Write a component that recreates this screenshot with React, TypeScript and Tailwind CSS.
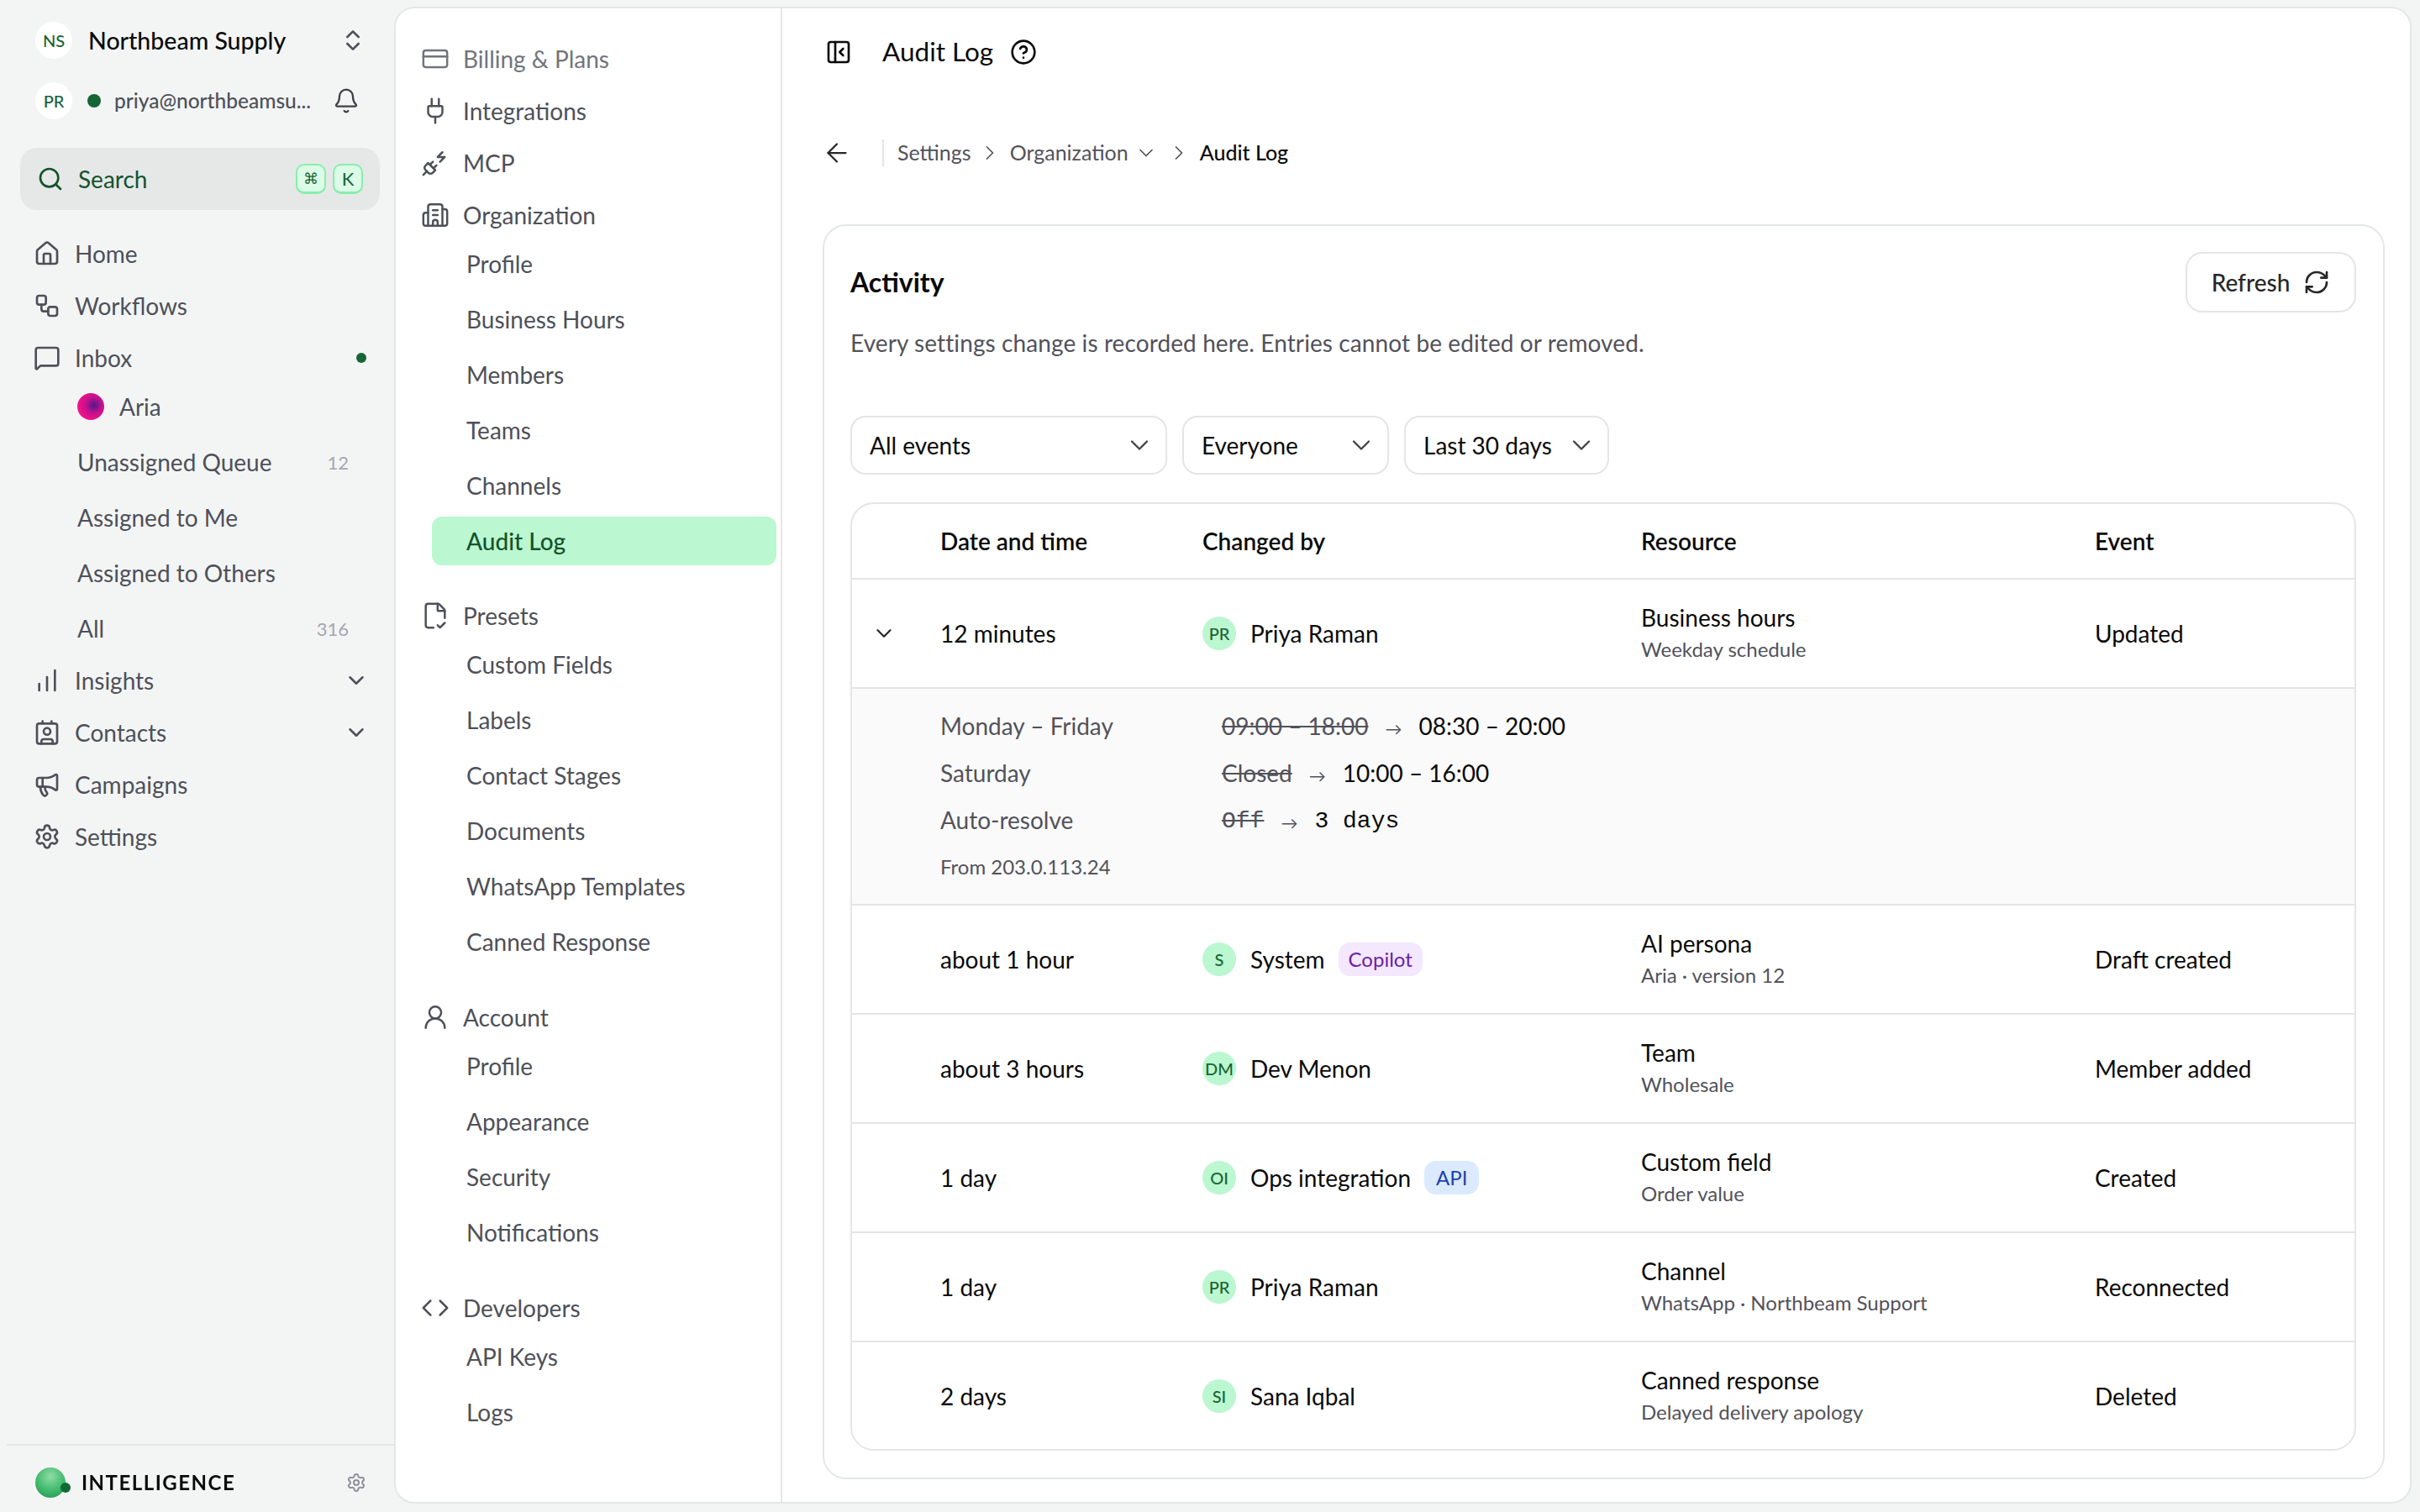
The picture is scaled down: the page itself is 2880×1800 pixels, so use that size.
import React from 'react';
import {
  ArrowLeft, Bell, Building2, ChartNoAxesColumnIncreasing, ChevronDown, ChevronRight, ChevronsUpDown, CircleHelp, Code,
  Contact, CreditCard, FileCheckCorner, House, Megaphone, MessageSquare, PanelLeftClose, Plug, PlugZap,
  RefreshCw, Search, Settings, UserRound, Workflow,
} from 'lucide-react';

type RowData = {
  time: string;
  initials: string;
  name: string;
  badge?: 'Copilot' | 'API';
  resource: string;
  detail: string;
  event: string;
};

const rows: RowData[] = [
  { time: 'about 1 hour', initials: 'S', name: 'System', badge: 'Copilot', resource: 'AI persona', detail: 'Aria · version 12', event: 'Draft created' },
  { time: 'about 3 hours', initials: 'DM', name: 'Dev Menon', resource: 'Team', detail: 'Wholesale', event: 'Member added' },
  { time: '1 day', initials: 'OI', name: 'Ops integration', badge: 'API', resource: 'Custom field', detail: 'Order value', event: 'Created' },
  { time: '1 day', initials: 'PR', name: 'Priya Raman', resource: 'Channel', detail: 'WhatsApp · Northbeam Support', event: 'Reconnected' },
  { time: '2 days', initials: 'SI', name: 'Sana Iqbal', resource: 'Canned response', detail: 'Delayed delivery apology', event: 'Deleted' },
];

const gridCols = 'grid grid-cols-[105px_312px_522px_540px_1fr] items-center';

const SideItem = ({ icon: Icon, label, chevron, dot }: { icon: React.ElementType; label: string; chevron?: boolean; dot?: boolean }) => (
  <div className="flex h-[62px] items-center pl-[40px] pr-[30px] text-[28px] text-[#4e5059]">
    <Icon size={32} strokeWidth={2} className="shrink-0" />
    <span className="ml-[17px] flex-1">{label}</span>
    {chevron && <ChevronDown size={30} strokeWidth={2} />}
    {dot && <span className="mr-[3px] h-[12px] w-[12px] rounded-full bg-[#166534]" />}
  </div>
);

const SideSub = ({ label, count }: { label: string; count?: string }) => (
  <div className="mt-[8px] flex h-[58px] items-center pl-[92px] pr-[54px] text-[28px] text-[#4e5059]">
    <span className="flex-1">{label}</span>
    {count && <span className="text-[22px] text-[#a5a7b0]">{count}</span>}
  </div>
);

const Sidebar = () => (
  <aside className="flex h-full w-[469px] shrink-0 flex-col">
    <div className="mt-[26px] flex h-[44px] items-center pl-[42px] pr-[33px]">
      <span className="flex h-[44px] w-[44px] items-center justify-center rounded-full bg-white text-[20px] font-medium text-[#166534]">NS</span>
      <span className="ml-[19px] flex-1 text-[28.5px] font-medium text-[#0a0a0a]">Northbeam Supply</span>
      <ChevronsUpDown size={32} strokeWidth={2} className="text-[#4e5059]" />
    </div>
    <div className="mt-[28px] flex h-[44px] items-center pl-[42px] pr-[41px]">
      <span className="flex h-[44px] w-[44px] items-center justify-center rounded-full bg-white text-[20px] font-medium text-[#166534]">PR</span>
      <span className="ml-[18px] h-[16px] w-[16px] rounded-full bg-[#166534]" />
      <span className="ml-[16px] flex-1 text-[24.5px] font-medium text-[#4e5059]">priya@northbeamsu...</span>
      <Bell size={32} strokeWidth={1.75} className="text-[#3f3f46]" />
    </div>
    <div className="ml-[24px] mr-[17px] mt-[34px] flex h-[74px] items-center rounded-[20px] bg-[#e6e8e8] pl-[20px] pr-[20px]">
      <Search size={32} strokeWidth={2} className="text-[#14532d]" />
      <span className="ml-[17px] flex-1 text-[28px] text-[#14532d]">Search</span>
      <span className="flex h-[36px] w-[36px] items-center justify-center rounded-[10px] border-2 border-b-[3px] border-[#86efac] bg-[#dcfce7] text-[18px] text-[#166534]">⌘</span>
      <span className="ml-[8px] flex h-[36px] w-[36px] items-center justify-center rounded-[10px] border-2 border-b-[3px] border-[#86efac] bg-[#dcfce7] text-[22px] text-[#166534]">K</span>
    </div>
    <nav className="mt-[21px] flex-1">
      <SideItem icon={House} label="Home" />
      <SideItem icon={Workflow} label="Workflows" />
      <SideItem icon={MessageSquare} label="Inbox" dot />
      <div className="-mt-[2px] flex h-[58px] items-center pl-[92px] text-[28px] text-[#4e5059]">
        <span className="h-[32px] w-[32px] rounded-full bg-[radial-gradient(circle_at_62%_45%,#4a1a8c_0%,#c4108c_36%,#f5128a_72%)]" />
        <span className="ml-[18px]">Aria</span>
      </div>
      <SideSub label="Unassigned Queue" count="12" />
      <SideSub label="Assigned to Me" />
      <SideSub label="Assigned to Others" />
      <SideSub label="All" count="316" />
      <div className="mt-[2px]">
        <SideItem icon={ChartNoAxesColumnIncreasing} label="Insights" chevron />
        <SideItem icon={Contact} label="Contacts" chevron />
        <SideItem icon={Megaphone} label="Campaigns" />
        <SideItem icon={Settings} label="Settings" />
      </div>
    </nav>
    <div className="ml-[8px] flex h-[81px] items-center border-t-2 border-[#e4e7e7] pl-[34px] pr-[33px] pt-[8px]">
      <div className="relative h-[36px] w-[36px] rounded-full bg-[radial-gradient(circle_at_50%_30%,#8fdca6_0%,#3fb96c_55%,#1f8f4a_100%)]">
        <span className="absolute left-[30px] top-[18px] h-[12px] w-[12px] rounded-full bg-[#116b32]" />
      </div>
      <span className="ml-[19px] flex-1 bg-[linear-gradient(90deg,#0a0a0a_66%,#14532d_82%,#16a34a_92%)] bg-clip-text text-[24px] font-bold tracking-[1.5px] text-transparent">INTELLIGENCE</span>
      <Settings size={24} strokeWidth={2} className="text-[#8e9099]" />
    </div>
  </aside>
);

const NavHead = ({ icon: Icon, label, muted, className = '' }: { icon: React.ElementType; label: string; muted?: boolean; className?: string }) => (
  <div className={`flex h-[62px] items-center pl-[32px] text-[28px] ${muted ? 'text-[#72747d]' : 'text-[#4e5059]'} ${className}`}>
    <span className="flex w-[30px] justify-center">
      <Icon size={34} strokeWidth={1.75} className="shrink-0" />
    </span>
    <span className="ml-[18px]">{label}</span>
  </div>
);

const NavSub = ({ items, active }: { items: string[]; active?: string }) => (
  <div className="-mt-[2px] flex flex-col gap-[8px]">
    {items.map(item => (
      <div
        key={item}
        className={`ml-[43px] mr-[5px] flex h-[58px] items-center rounded-[12px] pl-[41px] text-[28px] ${
          item === active ? 'bg-[#bbf7d0] font-medium text-[#14532d]' : 'text-[#4e5059]'
        }`}
      >
        {item}
      </div>
    ))}
  </div>
);

const SettingsNav = () => (
  <div className="h-full w-[460px] shrink-0 border-r-2 border-[#e4e7e7] pt-[29px]">
    <NavHead icon={CreditCard} label="Billing & Plans" muted />
    <NavHead icon={Plug} label="Integrations" />
    <NavHead icon={PlugZap} label="MCP" />
    <NavHead icon={Building2} label="Organization" />
    <NavSub items={['Profile', 'Business Hours', 'Members', 'Teams', 'Channels', 'Audit Log']} active="Audit Log" />
    <NavHead icon={FileCheckCorner} label="Presets" className="mt-[29px]" />
    <NavSub items={['Custom Fields', 'Labels', 'Contact Stages', 'Documents', 'WhatsApp Templates', 'Canned Response']} />
    <NavHead icon={UserRound} label="Account" className="mt-[30px]" />
    <NavSub items={['Profile', 'Appearance', 'Security', 'Notifications']} />
    <NavHead icon={Code} label="Developers" className="mt-[30px]" />
    <NavSub items={['API Keys', 'Logs']} />
  </div>
);

const Filter = ({ label, width }: { label: string; width: string }) => (
  <div className={`flex h-[70px] items-center justify-between rounded-[18px] border-2 border-[#e4e5e5] pl-[21px] pr-[13px] text-[28px] text-[#0a0a0a] ${width}`}>
    {label}
    <ChevronDown size={36} strokeWidth={1.5} className="text-[#3f3f46]" />
  </div>
);

const Avatar = ({ initials }: { initials: string }) => (
  <span className="flex h-[40px] w-[40px] shrink-0 items-center justify-center rounded-full bg-[#bbf7d0] text-[20px] font-medium text-[#166534]">{initials}</span>
);

const Person = ({ initials, name, badge }: { initials: string; name: string; badge?: string }) => (
  <div className="flex items-center">
    <Avatar initials={initials} />
    <span className="ml-[17px] text-[28px] text-[#0a0a0a]">{name}</span>
    {badge === 'Copilot' && <span className="ml-[16px] flex h-[40px] items-center rounded-[14px] bg-[#f3e8ff] px-[12px] text-[24px] text-[#6b21a8]">{badge}</span>}
    {badge === 'API' && <span className="ml-[16px] flex h-[40px] items-center rounded-[14px] bg-[#dbeafe] px-[14px] text-[24px] text-[#1e40af]">{badge}</span>}
  </div>
);

const ChangeRow = ({ label, before, after, mono }: { label: string; before: string; after: string; mono?: boolean }) => (
  <div className="flex h-[56px] items-center text-[28px]">
    <span className="w-[335px] text-[#52525b]">{label}</span>
    <span className="flex items-center">
      <span className={`text-[#52525b] line-through ${mono ? "translate-y-[2px] font-['Liberation_Mono',monospace]" : ''}`}>{before}</span>
      <span className="mx-[20px] translate-y-[3px] text-[20px] text-[#52525b]">→</span>
      <span className={`text-[#0a0a0a] ${mono ? "translate-y-[2px] font-['Liberation_Mono',monospace]" : ''}`}>{after}</span>
    </span>
  </div>
);

const Row = ({ row, last }: { row: RowData; last?: boolean }) => (
  <div className={`${gridCols} ${last ? 'h-[127px]' : 'h-[130px] border-b-2 border-[#e4e5e5]'}`}>
    <span />
    <span className="text-[28px] text-[#0a0a0a]">{row.time}</span>
    <Person initials={row.initials} name={row.name} badge={row.badge} />
    <div className="flex flex-col">
      <span className="text-[28px] leading-[38px] text-[#0a0a0a]">{row.resource}</span>
      <span className="text-[24px] leading-[38px] text-[#52525b]">{row.detail}</span>
    </div>
    <span className="text-[28px] text-[#0a0a0a]">{row.event}</span>
  </div>
);

const AuditLog = () => (
  <div className="min-w-0 flex-1">
    <header className="flex h-[104px] items-center pl-[51px]">
      <PanelLeftClose size={32} strokeWidth={2} className="text-[#0a0a0a]" />
      <span className="ml-[36px] text-[31.5px] text-[#0a0a0a]">Audit Log</span>
      <CircleHelp size={32} strokeWidth={2} className="ml-[20px] text-[#0a0a0a]" />
    </header>
    <div className="mt-[36px] flex h-[64px] items-center pl-[47px] text-[25px] text-[#52525b]">
      <ArrowLeft size={36} strokeWidth={1.5} className="text-[#27272a]" />
      <span className="ml-[36px] h-[32px] w-[2px] bg-[#e4e5e5]" />
      <span className="ml-[16px]">Settings</span>
      <ChevronRight size={28} strokeWidth={1.5} className="ml-[8px] mr-[10px]" />
      <span>Organization</span>
      <ChevronDown size={28} strokeWidth={1.5} className="ml-[7px]" />
      <ChevronRight size={28} strokeWidth={1.5} className="ml-[11px] mr-[11px]" />
      <span className="font-medium text-[#0a0a0a]">Audit Log</span>
    </div>
    <section className="ml-[48px] mr-[30px] mt-[53px] rounded-[28px] border-2 border-[#e4e7e7] pb-[32px] pl-[31px] pr-[32px] pt-[31px]">
      <div className="flex justify-between">
        <div className="min-w-0">
          <h2 className="flex h-[72px] items-center text-[32px] font-bold text-[#0a0a0a]">Activity</h2>
          <p className="mt-[18px] h-[36px] text-[28px] leading-[36px] tracking-[0.1px] text-[#52525b]">Every settings change is recorded here. Entries cannot be edited or removed.</p>
        </div>
        <button className="flex h-[72px] w-[203px] items-center justify-center gap-[16px] rounded-[20px] border-2 border-[#e4e5e5] text-[28px] font-medium text-[#27272a]">
          Refresh
          <RefreshCw size={32} strokeWidth={2} />
        </button>
      </div>
      <div className="mt-[69px] flex gap-[18px]">
        <Filter label="All events" width="w-[377px]" />
        <Filter label="Everyone" width="w-[246px]" />
        <Filter label="Last 30 days" width="w-[244px]" />
      </div>
      <div className="mt-[33px] overflow-hidden rounded-[28px] border-2 border-[#e4e5e5]">
        <div className={`${gridCols} h-[90px] border-b-2 border-[#e4e5e5] text-[28px] font-semibold text-[#0a0a0a]`}>
          <span />
          <span>Date and time</span>
          <span>Changed by</span>
          <span>Resource</span>
          <span>Event</span>
        </div>
        <div className={`${gridCols} h-[130px] border-b-2 border-[#e4e5e5]`}>
          <ChevronDown size={30} strokeWidth={1.75} className="ml-[23px] text-[#27272a]" />
          <span className="text-[28px] text-[#0a0a0a]">12 minutes</span>
          <Person initials="PR" name="Priya Raman" />
          <div className="flex flex-col">
            <span className="text-[28px] leading-[38px] text-[#0a0a0a]">Business hours</span>
            <span className="text-[24px] leading-[38px] text-[#52525b]">Weekday schedule</span>
          </div>
          <span className="text-[28px] text-[#0a0a0a]">Updated</span>
        </div>
        <div className="h-[258px] border-b-2 border-[#e4e5e5] bg-[#fafafa] pl-[105px] pt-[16px]">
          <ChangeRow label="Monday – Friday" before="09:00 – 18:00" after="08:30 – 20:00" />
          <ChangeRow label="Saturday" before="Closed" after="10:00 – 16:00" />
          <ChangeRow label="Auto-resolve" before="Off" after="3 days" mono />
          <div className="flex h-[56px] items-center text-[24px] text-[#52525b]">From 203.0.113.24</div>
        </div>
        {rows.map((row, i) => (
          <Row key={row.event} row={row} last={i === rows.length - 1} />
        ))}
      </div>
    </section>
  </div>
);

export default function App() {
  return (
    <div className="flex h-[1800px] w-[2880px] overflow-hidden bg-[#f3f5f5] font-['Lato',sans-serif]">
      <Sidebar />
      <main className="mb-[10px] mr-[10px] mt-[8px] flex min-w-0 flex-1 rounded-[24px] border-2 border-[#e4e7e7] bg-white">
        <SettingsNav />
        <AuditLog />
      </main>
    </div>
  );
}
